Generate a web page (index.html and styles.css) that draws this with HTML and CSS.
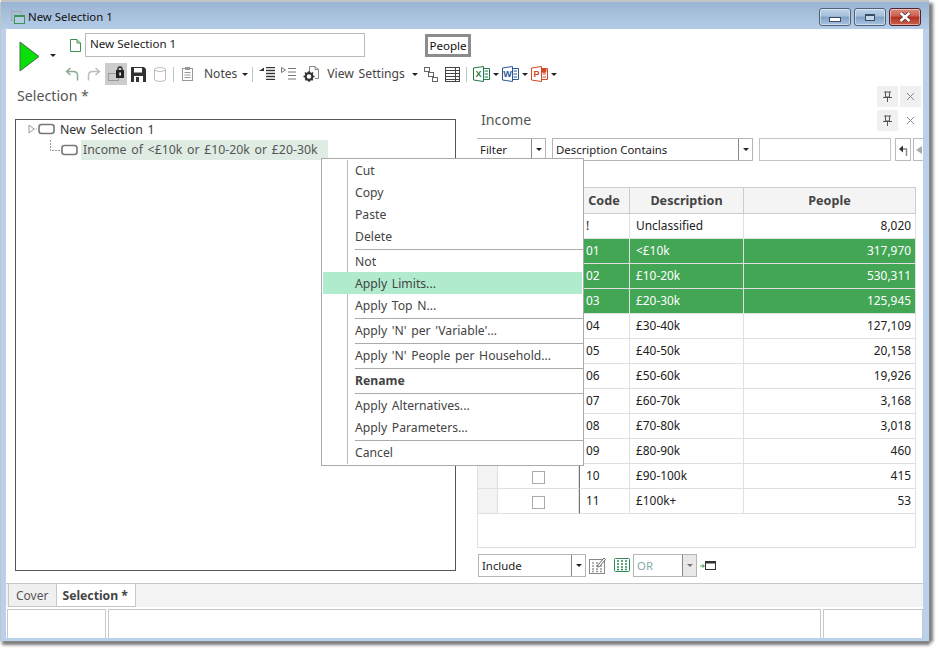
FILE: index.html
```html
<!DOCTYPE html>
<html lang="en">
<head>
  <meta charset="UTF-8" />
  <title>New Selection 1</title>
  <link rel="stylesheet" href="styles.css">
</head>
<body>

<div class="window">
  <div class="titlebar">
    <svg class="app-icon" width="14" height="14" viewBox="0 0 14 14"><rect x="0.5" y="0.5" width="10" height="9" fill="none" stroke="#a9a9a9"/><rect x="3.5" y="4.5" width="10" height="8" fill="#b4cce6" stroke="#3f9350"/><rect x="3" y="4" width="11" height="2" fill="#3f9350"/></svg>
    <span class="title-text">New Selection 1</span>
    <div class="win-buttons">
      <div class="win-btn"><span class="glyph-min"></span></div>
      <div class="win-btn"><span class="glyph-max"></span></div>
      <div class="win-btn win-close">
        <svg width="14" height="10" viewBox="0 0 14 10"><path d="M2.5 1 L11.5 9 M11.5 1 L2.5 9" stroke="#5a3030" stroke-width="4"/><path d="M2.5 1 L11.5 9 M11.5 1 L2.5 9" stroke="#fff" stroke-width="2.4"/></svg>
      </div>
    </div>
  </div>

  <div class="client">
    <div class="top">
      <div class="run">
        <svg width="21" height="31" viewBox="0 0 21 31"><path d="M1 1 L20 15.5 L1 30 Z" fill="#08de08" stroke="#4a6a4a"/></svg>
        <span class="caret run-caret"></span>
      </div>
      <div class="top-right">
        <div class="name-row">
          <svg width="11" height="13" viewBox="0 0 11 13"><path d="M0.5 0.5 H7 L10.5 4 V12.5 H0.5 Z M7 0.5 V4 H10.5" fill="#fff" stroke="#3f9350"/></svg>
          <div class="name-input">New Selection 1</div>
          <div class="people-box">People</div>
        </div>
        <div class="toolbar">
          <div class="tool"><svg width="14" height="14" viewBox="0 0 14 14"><path d="M12.5 13.5 V8 C12.5 5.5 10.5 4.5 8 4.5 H2 M5.5 1 L1.5 4.5 L5.5 8" fill="none" stroke="#8ba892" stroke-width="1.5"/></svg></div>
          <div class="tool"><svg width="14" height="14" viewBox="0 0 14 14"><path d="M1.5 13.5 V8 C1.5 5.5 3.5 4.5 6 4.5 H12 M8.5 1 L12.5 4.5 L8.5 8" fill="none" stroke="#bdbdbd" stroke-width="1.5"/></svg></div>
          <div class="tool tool-on"><svg width="16" height="16" viewBox="0 0 16 16"><rect x="0.5" y="7.5" width="10" height="7" fill="none" stroke="#999"/><rect x="8" y="4" width="8" height="8" fill="#222"/><path d="M10 4 V2.5 C10 0.5 14 0.5 14 2.5 V4" fill="none" stroke="#222" stroke-width="1.3"/><rect x="11.3" y="6.5" width="1.6" height="3" fill="#fff"/></svg></div>
          <div class="tool"><svg width="15" height="15" viewBox="0 0 15 15"><path d="M0 0 H13 L15 2 V15 H0 Z" fill="#333"/><rect x="3" y="1" width="8" height="4.5" fill="#fff"/><rect x="3" y="9" width="9" height="6" fill="#fff"/><rect x="5" y="10" width="3" height="5" fill="#333"/></svg></div>
          <div class="tool"><svg width="12" height="15" viewBox="0 0 12 15"><path d="M0.5 2.5 C0.5 0 11.5 0 11.5 2.5 V12.5 C11.5 15 0.5 15 0.5 12.5 Z M0.5 2.5 C0.5 5 11.5 5 11.5 2.5" fill="none" stroke="#bbb"/></svg></div>
          <span class="tool-sep"></span>
          <div class="tool"><svg width="11" height="14" viewBox="0 0 11 14"><rect x="0.5" y="1.5" width="10" height="12" fill="none" stroke="#999"/><rect x="3" y="0" width="5" height="3" fill="#999"/><path d="M2.5 5.5 H8.5 M2.5 8 H8.5 M2.5 10.5 H8.5" stroke="#999"/></svg></div>
          <span class="tool-label notes-label">Notes</span>
          <span class="caret"></span>
          <span class="tool-sep sep-b"></span>
          <div class="tool"><svg width="16" height="14" viewBox="0 0 16 14"><path d="M0 4 L5 0.5 V4 Z" fill="#333"/><path d="M7 0.5 H16 M7 3.5 H16 M7 6.5 H16 M7 9.5 H16 M7 12.5 H16" stroke="#333"/><path d="M7 2 H16 M7 5 H16 M7 8 H16 M7 11 H16" stroke="#aaa"/></svg></div>
          <div class="tool"><svg width="16" height="14" viewBox="0 0 16 14"><path d="M0.5 0.5 L4.5 3 L0.5 5.5 Z" fill="#fff" stroke="#777"/><path d="M7 1.5 H15 M7 5 H15 M7 8.5 H15 M7 12 H15" stroke="#777"/></svg></div>
          <div class="tool"><svg width="16" height="16" viewBox="0 0 16 16"><path d="M6.5 6 V0.5 H12 L15.5 3.5 V12.5 H12 M12 0.5 V3.5 H15.5" fill="#fff" stroke="#888"/><circle cx="6" cy="10.5" r="3.4" fill="none" stroke="#333" stroke-width="2.2"/><path d="M6 5 V16 M0.5 10.5 H11.5 M2 6.5 L10 14.5 M10 6.5 L2 14.5" stroke="#333" stroke-width="1.4" stroke-dasharray="1.6 7.8" /></svg></div>
          <span class="tool-label view-label">View Settings</span>
          <span class="caret view-caret"></span>
          <div class="tool"><svg width="14" height="15" viewBox="0 0 14 15"><rect x="0.5" y="0.5" width="5" height="4" fill="#fff" stroke="#666"/><rect x="4.5" y="5.5" width="5" height="4" fill="#fff" stroke="#666"/><rect x="8.5" y="10.5" width="5" height="4" fill="#fff" stroke="#666"/></svg></div>
          <div class="tool"><svg width="15" height="15" viewBox="0 0 15 15"><rect x="0.5" y="0.5" width="14" height="14" fill="#fff" stroke="#444"/><path d="M0 3.5 H15 M0 6.5 H15 M0 9.5 H15 M0 12.5 H15 M10.5 0 V15" stroke="#444"/></svg></div>
          <span class="tool-sep sep-c"></span>
          <svg class="office" width="17" height="16" viewBox="0 0 17 16"><path d="M10 2.5 H16.5 V13.5 H10" fill="#fff" stroke="#1d7a45"/><path d="M11.5 5 H15 M11.5 8 H15 M11.5 11 H15" stroke="#1d7a45"/><path d="M0.5 2 L10.5 0.5 V15.5 L0.5 14 Z" fill="#fff" stroke="#1d7a45"/><text x="5.5" y="11" class="office-letter" fill="#1d7a45">X</text></svg>
          <span class="caret office-caret"></span>
          <svg class="office" width="17" height="16" viewBox="0 0 17 16"><path d="M10 2.5 H16.5 V13.5 H10" fill="#fff" stroke="#2b5797"/><path d="M11.5 5 H15 M11.5 8 H15 M11.5 11 H15" stroke="#2b5797"/><path d="M0.5 2 L10.5 0.5 V15.5 L0.5 14 Z" fill="#fff" stroke="#2b5797"/><text x="5.5" y="11" class="office-letter" fill="#2b5797">W</text></svg>
          <span class="caret office-caret"></span>
          <svg class="office" width="17" height="16" viewBox="0 0 17 16"><path d="M10 2.5 H16.5 V13.5 H10" fill="#fff" stroke="#d24726"/><path d="M11.5 8 H15 M11.5 11 H15" stroke="#d24726"/><circle cx="13" cy="4.5" r="2.5" fill="#d24726"/><path d="M0.5 2 L10.5 0.5 V15.5 L0.5 14 Z" fill="#fff" stroke="#d24726"/><text x="5.5" y="11" class="office-letter" fill="#d24726">P</text></svg>
          <span class="caret office-caret"></span>
        </div>
      </div>
    </div>

    <div class="main">
      <div class="left-panel">
        <div class="panel-title">Selection *</div>
        <div class="tree">
          <div class="tree-row tree-root">
            <svg width="28" height="12" viewBox="0 0 28 12"><path d="M1 2 L6 6 L1 10 Z" fill="#fff" stroke="#999"/><path d="M6 6 H10" stroke="#aaa" stroke-dasharray="1 1"/><rect x="11" y="1.5" width="15" height="9" rx="2.5" fill="#fff" stroke="#777" stroke-width="1.6"/></svg>
            <span class="tree-text">New Selection 1</span>
          </div>
          <div class="tree-row tree-child">
            <svg width="28" height="20" viewBox="0 0 28 20"><path d="M0.5 0 V10.5 H12" fill="none" stroke="#999" stroke-dasharray="2 1"/><rect x="12" y="5.5" width="15" height="9" rx="2.5" fill="#fff" stroke="#777" stroke-width="1.6"/></svg>
            <span class="tree-text tree-sel">Income of &lt;£10k or £10-20k or £20-30k</span>
          </div>
        </div>
      </div>

      <div class="right-panel">
        <div class="pin-row">
          <div class="pin-btn"><svg width="11" height="11" viewBox="0 0 11 11"><path d="M2 1 H9 M3.5 1 V6 H7.5 V1 M1 6.5 H10 M5.5 6.5 V11" fill="none" stroke="#555"/></svg></div>
          <div class="pin-btn"><svg width="9" height="9" viewBox="0 0 9 9"><path d="M1 1 L8 8 M8 1 L1 8" stroke="#888"/></svg></div>
        </div>
        <div class="income-row">
          <div class="panel-title income-title">Income</div>
          <div class="pin-btn"><svg width="11" height="11" viewBox="0 0 11 11"><path d="M2 1 H9 M3.5 1 V6 H7.5 V1 M1 6.5 H10 M5.5 6.5 V11" fill="none" stroke="#555"/></svg></div>
          <div class="pin-btn pin-plain"><svg width="9" height="9" viewBox="0 0 9 9"><path d="M1 1 L8 8 M8 1 L1 8" stroke="#888"/></svg></div>
        </div>
        <div class="filter-row">
          <div class="combo combo-filter"><span class="combo-text">Filter</span><span class="combo-btn"><span class="caret"></span></span></div>
          <div class="combo combo-desc"><span class="combo-text">Description Contains</span><span class="combo-btn"><span class="caret"></span></span></div>
          <div class="filter-input"></div>
          <div class="small-btn"><svg width="11" height="12" viewBox="0 0 11 12"><path d="M8.5 12 V5 H4" fill="none" stroke="#888" stroke-width="1.4"/><path d="M5 1.5 L1 5 L5 8.5 Z" fill="#333"/></svg></div>
          <div class="small-btn small-clip"><span class="arrow-left"></span></div>
        </div>

        <div class="grid">
          <table class="grid-table">
            <colgroup>
              <col class="col-head"><col class="col-check"><col class="col-code"><col class="col-desc"><col class="col-people">
            </colgroup>
            <thead>
              <tr><th></th><th></th><th>Code</th><th>Description</th><th>People</th></tr>
            </thead>
            <tbody>
              <tr><td class="row-head"></td><td class="cell-check"><span class="check"></span></td><td class="cell-code">!</td><td>Unclassified</td><td class="num">8,020</td></tr>
              <tr class="row-sel"><td class="row-head"></td><td class="cell-check"><span class="check"></span></td><td class="cell-code">01</td><td>&lt;£10k</td><td class="num">317,970</td></tr>
              <tr class="row-sel"><td class="row-head"></td><td class="cell-check"><span class="check"></span></td><td class="cell-code">02</td><td>£10-20k</td><td class="num">530,311</td></tr>
              <tr class="row-sel"><td class="row-head"></td><td class="cell-check"><span class="check"></span></td><td class="cell-code">03</td><td>£20-30k</td><td class="num">125,945</td></tr>
              <tr><td class="row-head"></td><td class="cell-check"><span class="check"></span></td><td class="cell-code">04</td><td>£30-40k</td><td class="num">127,109</td></tr>
              <tr><td class="row-head"></td><td class="cell-check"><span class="check"></span></td><td class="cell-code">05</td><td>£40-50k</td><td class="num">20,158</td></tr>
              <tr><td class="row-head"></td><td class="cell-check"><span class="check"></span></td><td class="cell-code">06</td><td>£50-60k</td><td class="num">19,926</td></tr>
              <tr><td class="row-head"></td><td class="cell-check"><span class="check"></span></td><td class="cell-code">07</td><td>£60-70k</td><td class="num">3,168</td></tr>
              <tr><td class="row-head"></td><td class="cell-check"><span class="check"></span></td><td class="cell-code">08</td><td>£70-80k</td><td class="num">3,018</td></tr>
              <tr><td class="row-head"></td><td class="cell-check"><span class="check"></span></td><td class="cell-code">09</td><td>£80-90k</td><td class="num">460</td></tr>
              <tr><td class="row-head"></td><td class="cell-check"><span class="check"></span></td><td class="cell-code">10</td><td>£90-100k</td><td class="num">415</td></tr>
              <tr><td class="row-head"></td><td class="cell-check"><span class="check"></span></td><td class="cell-code">11</td><td>£100k+</td><td class="num">53</td></tr>
            </tbody>
          </table>
        </div>

        <div class="bottom-row">
          <div class="combo combo-include"><span class="combo-text">Include</span><span class="combo-btn"><span class="caret"></span></span></div>
          <svg class="icon-edit" width="17" height="17" viewBox="0 0 17 17"><rect x="0.5" y="2.5" width="15" height="14" fill="#fff" stroke="#888"/><path d="M3 6 H5 M7 6 H9 M3 9 H5 M7 9 H9 M11 9 H13 M3 12 H5 M7 12 H9 M11 12 H13 M3 14.5 H5 M7 14.5 H9 M11 14.5 H13" stroke="#999" stroke-width="1.6"/><path d="M9 8 L15 1 L16.5 2.5 L10.5 9.5 L8.5 10 Z" fill="#fff" stroke="#666"/></svg>
          <svg class="icon-table" width="16" height="15" viewBox="0 0 16 15"><rect x="0.5" y="0.5" width="15" height="13" rx="1" fill="#fff" stroke="#2e8b57"/><path d="M3 3 H5 M7 3 H9 M11 3 H13 M3 6 H5 M7 6 H9 M11 6 H13 M3 9 H5 M7 9 H9 M11 9 H13 M3 11.5 H5 M7 11.5 H9 M11 11.5 H13" stroke="#2e8b57" stroke-width="1.6"/></svg>
          <div class="combo combo-or"><span class="combo-text">OR</span><span class="combo-btn"><span class="caret caret-off"></span></span></div>
          <svg class="icon-send" width="16" height="9" viewBox="0 0 16 9"><path d="M0 5 H4 M2.5 3.5 L4.5 5 L2.5 6.5" fill="none" stroke="#3f9350"/><rect x="5.5" y="0.5" width="10" height="8" fill="#fff" stroke="#333"/><rect x="5" y="0" width="11" height="2.5" fill="#333"/></svg>
        </div>
      </div>

      <div class="menu">
        <div class="menu-item">Cut</div>
        <div class="menu-item">Copy</div>
        <div class="menu-item">Paste</div>
        <div class="menu-item">Delete</div>
        <div class="menu-sep"></div>
        <div class="menu-item">Not</div>
        <div class="menu-item menu-hover">Apply Limits...</div>
        <div class="menu-item">Apply Top N...</div>
        <div class="menu-sep"></div>
        <div class="menu-item">Apply 'N' per 'Variable'...</div>
        <div class="menu-sep"></div>
        <div class="menu-item">Apply 'N' People per Household...</div>
        <div class="menu-sep"></div>
        <div class="menu-item menu-bold">Rename</div>
        <div class="menu-sep"></div>
        <div class="menu-item">Apply Alternatives...</div>
        <div class="menu-item">Apply Parameters...</div>
        <div class="menu-sep"></div>
        <div class="menu-item">Cancel</div>
      </div>
    </div>

    <div class="tabs">
      <div class="tab">Cover</div>
      <div class="tab tab-on">Selection *</div>
    </div>
    <div class="status">
      <div class="status-cell status-a"></div>
      <div class="status-cell status-b"></div>
      <div class="status-cell status-c"></div>
    </div>
  </div>
</div>

</body>
</html>
```

FILE: styles.css
```css
html, body { margin: 0; height: 100%; background: #fff; overflow: hidden; }
body { font-family: "Noto Sans", sans-serif; font-size: 12px; color: #444; }

.window {
  width: 928px;
  height: 639px;
  margin: 2px 0 0 1px;
  padding: 0 6px 3px 5px;
  box-sizing: border-box;
  background: #b9d1ea;
  box-shadow: 0 -2px 1px #c4c4c4, -1px 0 1px #c4c4c4, 4px 1px 3px #7c7c7c, 1px 4px 3px #7c7c7c;
  display: flex;
  flex-direction: column;
}

/* title bar */
.titlebar {
  height: 27px;
  margin: 0 -6px 0 -5px;
  padding: 0 8px 0 10px;
  background: linear-gradient(#9ab5d3, #b4cce6);
  display: flex;
  align-items: center;
  flex: none;
}
.app-icon { margin-right: 3px; margin-top: 4px; }
.title-text { color: #111; margin-top: 2px; font-size: 11.4px; }
.win-buttons { margin-left: auto; display: flex; gap: 3px; margin-top: 6px; align-self: flex-start; }
.win-btn {
  width: 32px;
  height: 18px;
  box-sizing: border-box;
  border: 1px solid #4f6378;
  border-radius: 3px;
  background: linear-gradient(#bcd2e8 0, #a5bfdb 45%, #7f9fc4 50%, #a9c4e0 100%);
  box-shadow: inset 0 0 0 1px rgba(255,255,255,.45);
  display: flex;
  align-items: center;
  justify-content: center;
}
.win-close { background: linear-gradient(#dd8a7c 0, #c9604f 45%, #b3301d 50%, #c9604f 100%); border-color: #4d2430; }
.glyph-min { width: 10px; height: 3px; background: #fff; border: 1px solid #3b4c60; margin-top: 4px; }
.glyph-max { width: 8px; height: 5px; background: #c5d8ec; border: 1px solid #3b4c60; box-shadow: inset 0 1px 0 #3b4c60; }

.client {
  width: 917px;
  height: 609px;
  background: #fff;
  display: flex;
  flex-direction: column;
  flex: none;
}

/* top toolbar */
.top { height: 57px; display: flex; flex: none; padding-left: 13px; }
.run { width: 42px; display: flex; align-items: flex-start; padding-top: 12px; box-sizing: border-box; }
.run-caret { margin: 13px 0 0 10px; }
.top-right { padding-top: 4px; }
.name-row { height: 24px; padding-left: 9px; display: flex; align-items: center; }
.name-input {
  width: 280px;
  height: 24px;
  margin-left: 4px;
  box-sizing: border-box;
  border: 1px solid #bbb;
  padding: 0 4px;
  line-height: 20px;
  color: #222;
  font-size: 11.6px;
}
.people-box {
  width: 46px;
  height: 23px;
  margin-left: 60px;
  box-sizing: border-box;
  border: 3px solid #8c8c8c;
  text-align: center;
  line-height: 17px;
  color: #111;
  font-size: 11.6px;
}
.toolbar { height: 22px; margin-top: 6px; display: flex; align-items: center; }
.tool { width: 22px; height: 22px; display: flex; align-items: center; justify-content: center; flex: none; }
.tool-on { background: #ccc; }
.tool-sep { width: 1px; height: 15px; margin: 0 2px 0 2px; background: #b5cbbb; flex: none; }
.sep-b { margin: 0 3px 0 4px; }
.sep-c { margin: 0 6px 0 2px; }
.tool-label { white-space: nowrap; color: #444; margin-top: -2px; }
.notes-label { margin-left: 6px; }
.view-label { margin-left: 5px; font-size: 12.2px; word-spacing: 1.5px; }
.caret {
  width: 0;
  height: 0;
  border-left: 3px solid transparent;
  border-right: 3px solid transparent;
  border-top: 3px solid #222;
  display: inline-block;
  flex: none;
}
.toolbar > .caret { margin-left: 5px; }
.toolbar > .view-caret { margin: 0 2px 0 7px; }
.toolbar > .office-caret { margin: 0 3px 0 3px; }
.office-letter { font-family: "Liberation Sans", sans-serif; font-size: 9px; font-weight: bold; text-anchor: middle; }
.caret-off { border-top-color: #777; }

/* main area */
.main { height: 497px; position: relative; display: flex; flex: none; }
.left-panel { width: 471px; padding-left: 9px; box-sizing: border-box; flex: none; }
.panel-title { font-size: 14.2px; color: #555; height: 33px; line-height: 20px; white-space: nowrap; }
.left-panel .panel-title { padding: 0 0 0 2px; box-sizing: border-box; }
.tree {
  width: 441px;
  height: 452px;
  box-sizing: border-box;
  border: 1px solid #555;
  padding-left: 12px;
  font-size: 12.3px;
  word-spacing: 1.5px;
}
.tree-row { height: 20px; display: flex; align-items: center; color: #333; }
.tree-root { box-sizing: border-box; padding-bottom: 2px; }
.tree-text { margin-left: 4px; white-space: nowrap; }
.tree-child { margin-left: 22px; }
.tree-child .tree-text { margin-left: 3px; }
.tree-sel { background: #dfece3; height: 20px; line-height: 20px; padding: 0 10px 0 2px; color: #555; }

.right-panel { width: 446px; overflow: hidden; flex: none; }
.pin-row { height: 21px; display: flex; justify-content: flex-end; gap: 2px; padding-right: 2px; }
.income-row { height: 21px; margin-top: 3px; display: flex; gap: 2px; padding-right: 2px; }
.income-title { margin-right: auto; padding-left: 4px; height: 21px; line-height: 19px; }
.pin-btn { width: 21px; height: 21px; background: #f0f0f0; display: flex; align-items: center; justify-content: center; }
.pin-plain { background: none; }

.filter-row { height: 23px; margin-top: 7px; display: flex; }
.combo { height: 23px; box-sizing: border-box; border: 1px solid #b5b5b5; display: flex; align-items: center; flex: none; background: #fff; font-size: 11.4px; }
.combo-text { flex: 1; padding-left: 3px; padding-bottom: 1px; color: #222; white-space: nowrap; }
.combo-btn { width: 13px; height: 21px; border-left: 1px solid #888; display: flex; align-items: center; justify-content: center; }
.combo-filter { width: 70px; margin-left: -1px; }
.combo-desc { width: 201px; margin-left: 6px; }
.filter-input { width: 132px; height: 23px; margin-left: 6px; box-sizing: border-box; border: 1px solid #c4c4c4; flex: none; }
.small-btn { width: 16px; height: 23px; margin-left: 4px; box-sizing: border-box; border: 1px solid #bbb; display: flex; align-items: center; justify-content: center; flex: none; }
.small-clip { margin-left: 2px; justify-content: flex-start; padding-left: 2px; }
.arrow-left { width: 0; height: 0; border-top: 4px solid transparent; border-bottom: 4px solid transparent; border-right: 6px solid #aaa; }

/* grid */
.grid { width: 439px; height: 361px; margin-top: 26px; box-sizing: border-box; border: 1px solid #e0e0e0; border-top: 0; }
.grid-table { width: 438px; table-layout: fixed; border-collapse: separate; border-spacing: 0; font-size: 11.9px; }
.col-head { width: 20px; }
.col-check { width: 81px; }
.col-code { width: 51px; }
.col-desc { width: 114px; }
.grid-table th {
  height: 27px;
  padding: 0;
  box-sizing: border-box;
  background: #f4f4f4;
  border-top: 1px solid #ccc;
  border-right: 1px solid #ccc;
  border-bottom: 1px solid #ccc;
  font-weight: bold;
  font-size: 12.6px;
  color: #444;
  text-align: center;
}
.grid-table td {
  height: 25px;
  padding: 0 5px 2px 6px;
  box-sizing: border-box;
  border-right: 1px solid #e0e0e0;
  border-bottom: 1px solid #e0e0e0;
  color: #222;
  white-space: nowrap;
}
.grid-table td.cell-code { padding-left: 6px; border-left: 1px solid #777; }
.grid-table td.row-head { background: #f3f3f3; }
.grid-table td.cell-check { text-align: center; padding: 0; }
.grid-table td.num { text-align: right; padding-right: 4px; }
.check { display: inline-block; width: 13px; height: 13px; box-sizing: border-box; border: 1px solid #aaa; vertical-align: middle; }
.row-sel td { background: #43a655; color: #fff; border-color: #e0e0e0; }

.bottom-row { height: 23px; margin-top: 6px; display: flex; align-items: center; }
.combo-include { width: 108px; margin-left: 1px; }
.combo-include .combo-text { padding-left: 3px; }
.icon-edit { margin-left: 3px; }
.icon-table { margin-left: 8px; }
.combo-or { width: 64px; margin-left: 3px; }
.combo-or .combo-text { color: #8aa; }
.combo-or .combo-btn { background: #e8e8e8; }
.icon-send { margin-left: 3px; }

/* context menu */
.menu {
  position: absolute;
  left: 315px;
  top: 72px;
  width: 263px;
  height: 308px;
  box-sizing: border-box;
  border: 1px solid #aaa;
  background: #fff;
  padding: 0 1px 2px;
  font-size: 12.2px;
  word-spacing: 1.5px;
}
.menu::before {
  content: "";
  position: absolute;
  left: 25px;
  top: 1px;
  bottom: 1px;
  width: 1px;
  background: #bbb;
}
.menu-item { position: relative; height: 22px; line-height: 23px; padding-left: 32px; color: #444; white-space: nowrap; }
.menu-hover { background: #b0ebcd; }
.menu-bold { font-weight: bold; }
.menu-sep { height: 1px; margin: 2px -1px 0 32px; background: #aaa; }

/* tabs and status */
.tabs { height: 24px; box-sizing: border-box; border-top: 1px solid #c8c8c8; background: #f3f3f3; padding-left: 2px; display: flex; flex: none; }
.tab { height: 23px; box-sizing: border-box; border: 1px solid #c8c8c8; border-top: 0; padding: 0 8px 0 7px; line-height: 23px; background: #f0f0f0; color: #555; }
.tab-on { background: #fff; font-weight: bold; font-size: 12.2px; color: #444; border-left: 0; padding: 0 7px 0 5px; }
.status { height: 31px; padding-top: 2px; box-sizing: border-box; display: flex; gap: 2px; padding-left: 1px; flex: none; }
.status-cell { height: 29px; box-sizing: border-box; border: 1px solid #c8c8c8; border-bottom: 0; }
.status-a { width: 99px; }
.status-b { width: 713px; }
.status-c { width: 100px; }
```
